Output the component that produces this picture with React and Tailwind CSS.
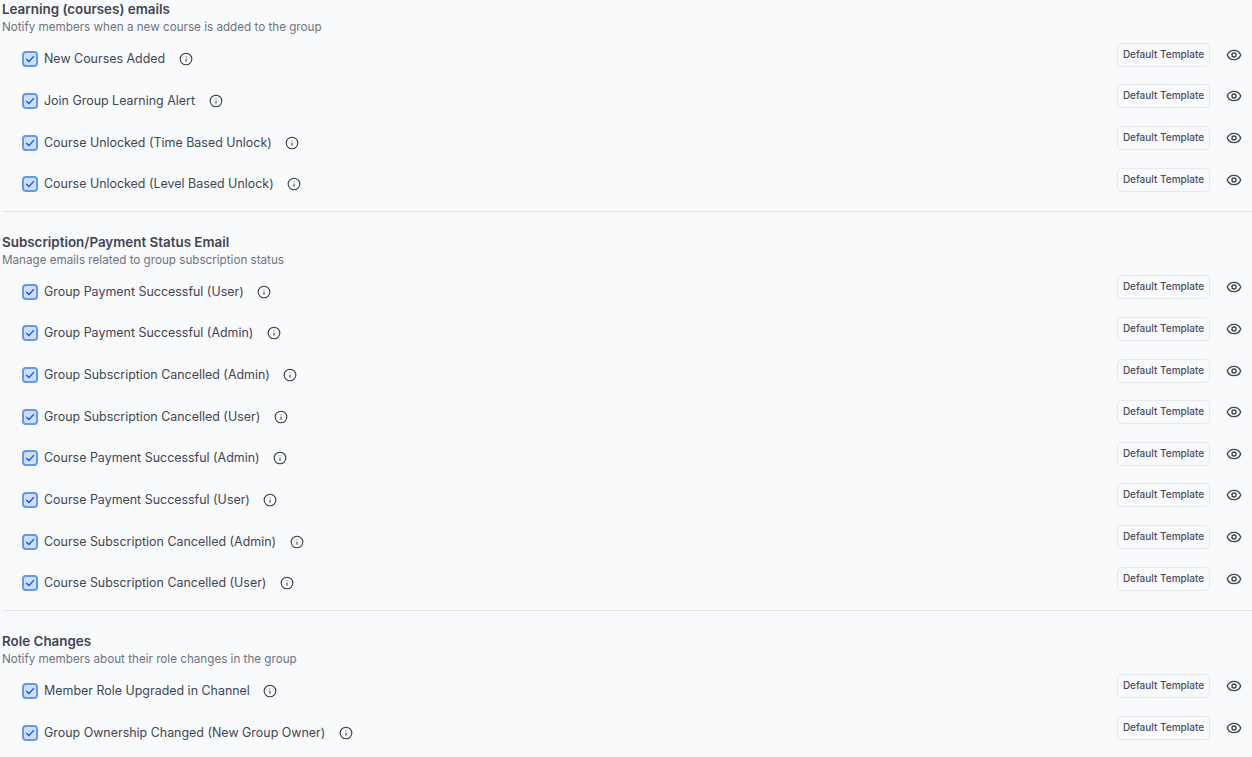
import React from 'react';
import { Eye, Info } from 'lucide-react';

const sections = [
  {
    title: 'Learning (courses) emails',
    description: 'Notify members when a new course is added to the group',
    items: ['New Courses Added', 'Join Group Learning Alert', 'Course Unlocked (Time Based Unlock)', 'Course Unlocked (Level Based Unlock)'],
  },
  {
    title: 'Subscription/Payment Status Email',
    description: 'Manage emails related to group subscription status',
    items: [
      'Group Payment Successful (User)',
      'Group Payment Successful (Admin)',
      'Group Subscription Cancelled (Admin)',
      'Group Subscription Cancelled (User)',
      'Course Payment Successful (Admin)',
      'Course Payment Successful (User)',
      'Course Subscription Cancelled (Admin)',
      'Course Subscription Cancelled (User)',
    ],
  },
  {
    title: 'Role Changes',
    description: 'Notify members about their role changes in the group',
    items: ['Member Role Upgraded in Channel', 'Group Ownership Changed (New Group Owner)'],
  },
];

const Checkbox = () => (
  <span className="flex h-4 w-4 shrink-0 items-center justify-center rounded-[4px] border-2 border-[#6496f5] bg-[#cfe0fd]">
    <svg viewBox="0 0 12 12" className="h-3 w-3" fill="none" stroke="#2563eb" strokeWidth="1.5" strokeLinecap="round" strokeLinejoin="round">
      <path d="M2.5 6.3 5 8.6 9.6 3.6" />
    </svg>
  </span>
);

const Row = ({ label }) => (
  <div className="flex h-[41.67px] items-start justify-between pl-5">
    <div className="flex items-center pt-[8.6px]">
      <Checkbox />
      <span className="ml-[6px] text-[12.45px] leading-4 text-[#414552]">{label}</span>
      <Info size={14} strokeWidth={1.8} className="ml-[13.5px] text-[#343741]" />
    </div>
    <div className="flex items-center">
      <button className="h-6 w-[93px] rounded-[5px] border border-[#e6e8ec] pb-[2px] text-[10px] font-medium leading-none text-[#4a4e5c]">
        Default Template
      </button>
      <Eye size={16} strokeWidth={2.1} className="ml-4 mr-[10px] text-[#414552]" />
    </div>
  </div>
);

export default function App() {
  return (
    <div className="h-[757px] overflow-hidden bg-[#f9fafc] pl-[2px] font-['Inter',sans-serif]">
      <div className="-mt-[0.8px]">
        {sections.map((section, i) => (
          <section key={section.title} className={i > 0 ? 'mt-5' : ''}>
            <h2 className="text-[13.4px] font-semibold leading-5 text-[#414552]">{section.title}</h2>
            <p className="mb-[6.4px] -mt-px text-[11.67px] leading-[18px] text-[#6f7380]">{section.description}</p>
            {section.items.map((item) => (
              <Row key={item} label={item} />
            ))}
            {i < sections.length - 1 && <div className="mt-[1.6px] h-px bg-[#e3e5ea]" />}
          </section>
        ))}
      </div>
    </div>
  );
}
